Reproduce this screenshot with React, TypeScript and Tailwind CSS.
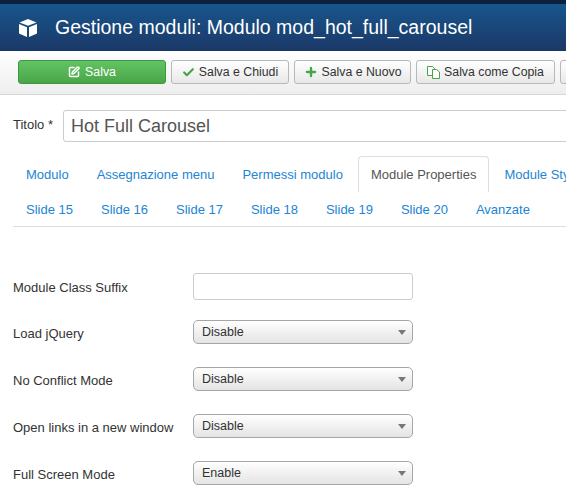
import React from 'react';
import { Check, Plus, SquarePen } from 'lucide-react';

const topTabs = ['Modulo', 'Assegnazione menu', 'Permessi modulo', 'Module Properties', 'Module Style'];
const slideTabs = ['Slide 15', 'Slide 16', 'Slide 17', 'Slide 18', 'Slide 19', 'Slide 20', 'Avanzate'];

const selects = [
  { label: 'Load jQuery', value: 'Disable' },
  { label: 'No Conflict Mode', value: 'Disable' },
  { label: 'Open links in a new window', value: 'Disable' },
  { label: 'Full Screen Mode', value: 'Enable' },
];

const Cube: React.FC = () => (
  <svg width="20" height="20" viewBox="0 0 20 20" fill="#fff">
    <path d="M10 1 L18.5 4.4 L10 7.8 L1.5 4.4 Z" />
    <path d="M1 6 L9 9.3 L9 19 L1 15.6 Z" />
    <path d="M19 6 L11 9.3 L11 19 L19 15.6 Z" />
  </svg>
);

const CopyIcon: React.FC = () => (
  <svg width="13" height="13" viewBox="0 0 13 13" fill="none" stroke="#46a546" strokeWidth="1">
    <path d="M0.5 0.5 H5.5 L7.5 2.5 V9.5 H0.5 Z" fill="#fff" />
    <path d="M5.5 3.5 H9.5 L12.5 6 V12.5 H5.5 Z" fill="#fff" />
  </svg>
);

const ToolButton: React.FC<{ width: string; icon: React.ReactNode; label: string }> = ({ width, icon, label }) => (
  <div className={`${width} h-[24px] shrink-0 flex items-center justify-center gap-[4px] rounded-[3px] border border-[#b8b8b8] bg-gradient-to-b from-white to-[#e8e8e8] text-[12.3px] text-[#333]`}>
    {icon}
    <span>{label}</span>
  </div>
);

const Row: React.FC<{ label: string; children: React.ReactNode }> = ({ label, children }) => (
  <div className="flex items-center">
    <div className="w-[180px] shrink-0 pt-[3px] text-[13px] text-[#333] whitespace-nowrap">{label}</div>
    {children}
  </div>
);

const App: React.FC = () => {
  return (
    <div className="w-[566px] h-[498px] overflow-hidden bg-white font-['Liberation_Sans',Arial,sans-serif]">
      {/* Header */}
      <header className="h-[51px] border-t-[4px] border-[#0b1f3f] bg-gradient-to-b from-[#17568c] to-[#1a3867] flex items-center pl-[18px] gap-[17px] shrink-0">
        <Cube />
        <h1 className="text-[19.5px] leading-none text-white whitespace-nowrap">Gestione moduli: Modulo mod_hot_full_carousel</h1>
      </header>

      {/* Toolbar */}
      <div className="h-[44px] pt-[9px] pl-[18px] flex gap-[5px] bg-gradient-to-b from-white to-[#eeeeee] border-b border-[#d8d8d8]">
        <div className="w-[148px] h-[24px] shrink-0 flex items-center justify-center gap-[5px] rounded-[3px] border border-[#3f9a3f] bg-gradient-to-b from-[#62c462] to-[#4aa54a] text-[12.3px] text-white">
          <SquarePen size={12} strokeWidth={3} />
          <span>Salva</span>
        </div>
        <ToolButton width="w-[118px]" label="Salva e Chiudi" icon={<Check size={13} strokeWidth={4} className="text-[#46a546]" />} />
        <ToolButton width="w-[117px]" label="Salva e Nuovo" icon={<Plus size={14} strokeWidth={4} className="text-[#46a546]" />} />
        <ToolButton width="w-[139px]" label="Salva come Copia" icon={<CopyIcon />} />
        <ToolButton width="w-[40px]" label="" icon={null} />
      </div>

      {/* Title */}
      <div className="mt-[15px] pl-[13px] flex items-center">
        <label className="w-[50px] shrink-0 text-[13px] text-[#333] -mt-[2px]">Titolo *</label>
        <div className="w-[520px] shrink-0 h-[32px] rounded-[3px] border border-[#cccccc] pl-[7px] flex items-center text-[18px] text-[#555]">
          Hot Full Carousel
        </div>
      </div>

      {/* Tabs */}
      <div className="mt-[14px] ml-[13px] border-b border-[#dddddd] h-[71px]">
        <div className="flex h-[36px]">
          {topTabs.map((tab) => {
            const active = tab === 'Module Properties';
            return (
              <div
                key={tab}
                className={`shrink-0 mr-[2px] px-[12px] flex items-center text-[13px] whitespace-nowrap rounded-t-[4px] border border-b-0 ${
                  active ? 'border-[#dddddd] text-[#555]' : 'border-transparent text-[#2384d3]'
                }`}
              >
                {tab}
              </div>
            );
          })}
        </div>
        <div className="flex h-[34px] pt-[2px]">
          {slideTabs.map((tab) => (
            <div key={tab} className="shrink-0 mr-[2px] px-[12px] border border-transparent flex items-center text-[13px] whitespace-nowrap text-[#2384d3]">
              {tab}
            </div>
          ))}
        </div>
      </div>

      {/* Form */}
      <div className="mt-[46px] pl-[13px] flex flex-col gap-[23px]">
        <div className="-mb-[3px]">
          <Row label="Module Class Suffix">
            <div className="w-[220px] h-[27px] rounded-[3px] border border-[#cccccc] bg-white" />
          </Row>
        </div>
        {selects.map((s) => (
          <Row key={s.label} label={s.label}>
            <div className="w-[220px] h-[24px] pl-[8px] pr-[6px] pt-[1px] flex items-center justify-between rounded-[5px] border border-[#a6a6a6] bg-gradient-to-b from-white via-[#f1f1f1] to-[#e4e4e4] text-[12.5px] text-[#333]">
              <span>{s.value}</span>
              <span className="w-0 h-0 border-x-[4px] border-x-transparent border-t-[5px] border-t-[#777]" />
            </div>
          </Row>
        ))}
      </div>
    </div>
  );
};

export default App;
